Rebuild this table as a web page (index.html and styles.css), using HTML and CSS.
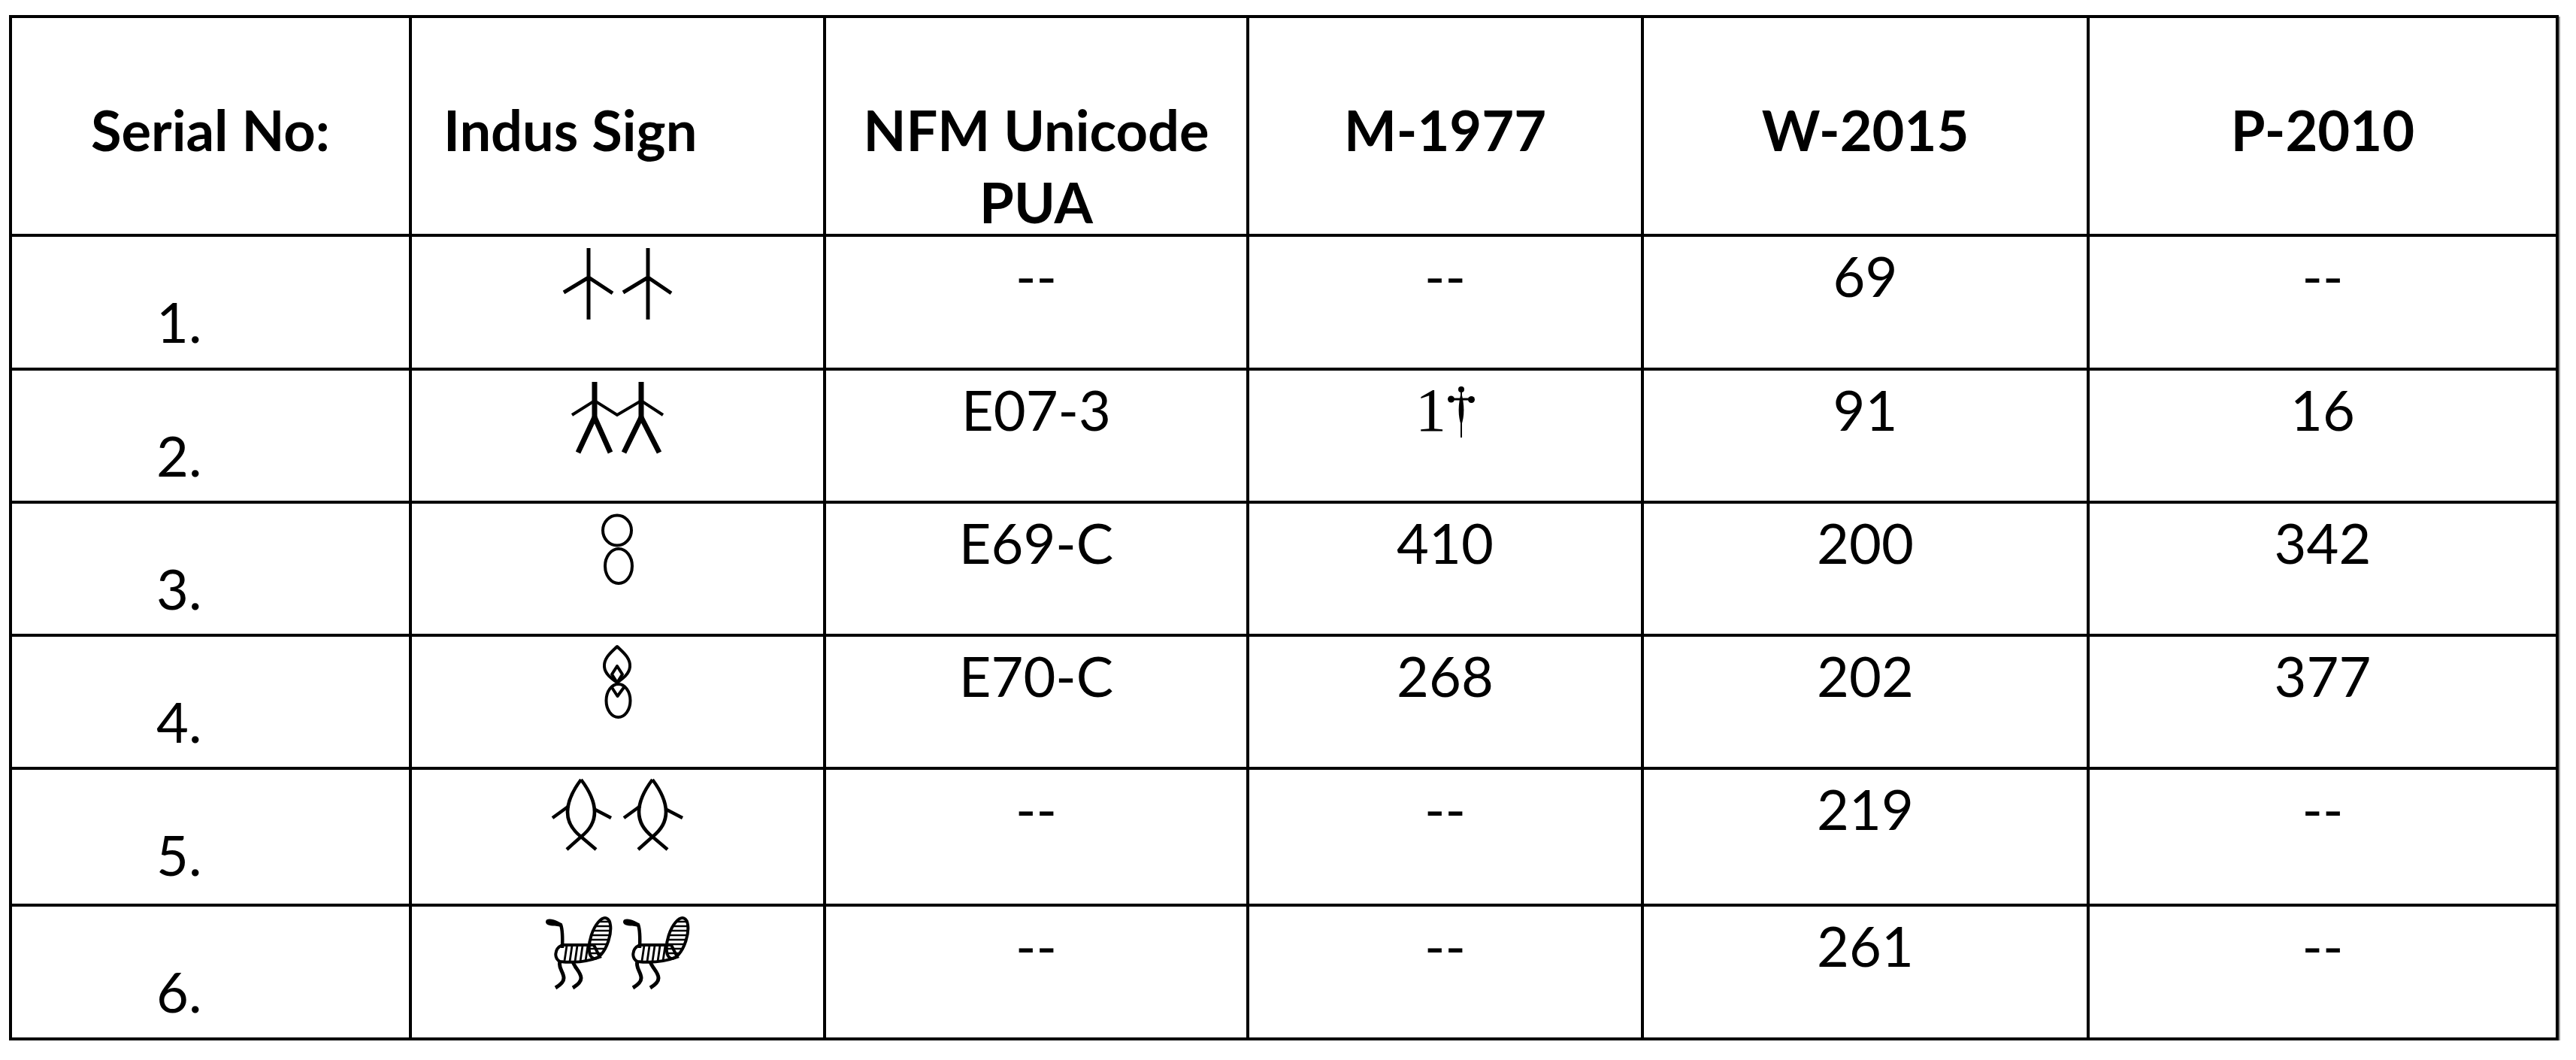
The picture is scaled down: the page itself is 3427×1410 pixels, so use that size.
FILE: index.html
```html
<!DOCTYPE html>
<html lang="en">
<head>
<meta charset="utf-8">
<title>Indus signs</title>
<link rel="stylesheet" href="styles.css">
</head>
<body>
<div class="sheet">
  <div class="grid" role="table">
    <div class="cell head" role="columnheader">Serial No:</div>
    <div class="cell head head-left" role="columnheader">Indus Sign</div>
    <div class="cell head" role="columnheader">NFM Unicode PUA</div>
    <div class="cell head" role="columnheader">M-1977</div>
    <div class="cell head" role="columnheader">W-2015</div>
    <div class="cell head" role="columnheader">P-2010</div>

    <div class="cell serial">1.</div>
    <div class="cell sign">
      <svg class="s1" width="153" height="100" viewBox="0 0 153 100">
        <g stroke="#000" stroke-width="5" fill="none">
          <path d="M38,2 V97 M5,61 L38,41 L70,62"/>
          <path d="M117,2 V97 M84,61 L117,41 L148,62"/>
        </g>
      </svg>
    </div>
    <div class="cell">--</div>
    <div class="cell">--</div>
    <div class="cell">69</div>
    <div class="cell">--</div>

    <div class="cell serial">2.</div>
    <div class="cell sign">
      <svg class="s2" width="130" height="100" viewBox="0 0 130 100">
        <g stroke="#000" fill="none">
          <path stroke-width="7" d="M34,3 V55 M96,3 V55"/>
          <path stroke-width="7" d="M34,50 L12,97 M34,50 L55,97 M96,50 L73,97 M96,50 L120,97"/>
          <path stroke-width="4" d="M4,47 L34,28 L64,47 L96,28 L125,47"/>
        </g>
      </svg>
    </div>
    <div class="cell">E07-3</div>
    <div class="cell"><span class="serif-one">1</span><svg class="dagger" width="36" height="68" viewBox="0 0 36 68">
        <circle cx="18" cy="4" r="4" fill="#000"/>
        <circle cx="4.5" cy="17" r="4.5" fill="#000"/>
        <circle cx="31.5" cy="17.5" r="4.5" fill="#000"/>
        <path d="M4,17 H32" stroke="#000" stroke-width="3"/>
        <path d="M18,8 C22.5,24 22.5,40 18,52 C13.5,40 13.5,24 18,8 Z" fill="#000"/>
        <path d="M18,3 V68" stroke="#000" stroke-width="2"/>
      </svg></div>
    <div class="cell">91</div>
    <div class="cell">16</div>

    <div class="cell serial">3.</div>
    <div class="cell sign">
      <svg class="s3" width="55" height="105" viewBox="0 0 55 105">
        <g stroke="#000" stroke-width="4" fill="none">
          <ellipse cx="27" cy="27.5" rx="19" ry="20"/>
          <ellipse cx="29" cy="75" rx="18" ry="23"/>
        </g>
      </svg>
    </div>
    <div class="cell">E69-C</div>
    <div class="cell">410</div>
    <div class="cell">200</div>
    <div class="cell">342</div>

    <div class="cell serial">4.</div>
    <div class="cell sign">
      <svg class="s4" width="55" height="105" viewBox="0 0 55 105">
        <g stroke="#000" stroke-width="4" fill="none" stroke-linejoin="round">
          <path d="M27,5 C20,12 9,20 10,32 C11,42 20,48 27,53 C34,48 43,42 44,32 C45,20 34,12 27,5 Z"/>
          <path d="M27,31 L20,42 L27,53 L34,42 Z"/>
          <ellipse cx="28.5" cy="77" rx="16" ry="22"/>
          <path d="M19,58 L27.5,71 L37,58"/>
        </g>
      </svg>
    </div>
    <div class="cell">E70-C</div>
    <div class="cell">268</div>
    <div class="cell">202</div>
    <div class="cell">377</div>

    <div class="cell serial">5.</div>
    <div class="cell sign">
      <svg class="s5" width="185" height="105" viewBox="0 0 185 105">
        <defs>
          <g id="fishman" stroke="#000" stroke-width="4.5" fill="none">
            <path d="M44,5 Q8,53 44,81 L64,98"/>
            <path d="M44,5 Q80,53 44,81 L25,98"/>
            <path d="M28,40 L6,56 M61,44 L84,56"/>
          </g>
        </defs>
        <use href="#fishman"/>
        <use href="#fishman" x="95"/>
      </svg>
    </div>
    <div class="cell">--</div>
    <div class="cell">--</div>
    <div class="cell">219</div>
    <div class="cell">--</div>

    <div class="cell serial">6.</div>
    <div class="cell sign">
      <svg class="s6" width="203" height="105" viewBox="0 0 203 105">
        <defs>
          <clipPath id="wingclip">
            <ellipse cx="78" cy="33" rx="12" ry="28" transform="rotate(18 78 33)"/>
          </clipPath>
          <g id="bird">
            <path d="M6,11 C6,6 15,7 21,10 L28,13.5 L27.5,18 L18,16.5 C10,16.5 6,15 6,11 Z" fill="#000"/>
            <path d="M26,15 C28.5,22 28.5,35 28,46" stroke="#000" stroke-width="4.5" fill="none"/>
            <path d="M28,42 L70,42 L78,58 C62,64 42,66 25,64 C17,60 17,47 28,42 Z" stroke="#000" stroke-width="4" fill="none"/>
            <path d="M34,43 L31,63 M41,43 L38,64 M48,43 L45,64 M55,43 L52,64 M62,43 L59,63" stroke="#000" stroke-width="2.8"/>
            <g clip-path="url(#wingclip)" stroke="#000" stroke-width="2.5">
              <path d="M60,11 H100 M60,17 H100 M60,23 H100 M60,29 H100 M60,35 H100 M60,41 H100 M60,47 H100 M60,53 H100"/>
            </g>
            <ellipse cx="78" cy="33" rx="12" ry="28" transform="rotate(18 78 33)" stroke="#000" stroke-width="4" fill="none"/>
            <path d="M25,64 C22,72 30,78 30,86 C30,92 24,96 19,99 M42,64 C44,72 53,78 53,86 C53,92 47,96 42,99" stroke="#000" stroke-width="5" fill="none"/>
          </g>
        </defs>
        <use href="#bird"/>
        <use href="#bird" x="103"/>
      </svg>
    </div>
    <div class="cell">--</div>
    <div class="cell">--</div>
    <div class="cell">261</div>
    <div class="cell">--</div>
  </div>
</div>
</body>
</html>
```

FILE: styles.css
```css
html, body {
  margin: 0;
  padding: 0;
  background: #ffffff;
}

body {
  font-family: Lato, "Open Sans", "Liberation Sans", sans-serif;
  color: #000;
}

.sheet {
  padding: 20px 0 0 12px;
}

.grid {
  display: grid;
  grid-template-columns: 532px 551px 563px 525px 593px 624px;
  grid-template-rows: 291px 178px 177px 177px 177px 182px 178px;
  width: max-content;
  border-left: 4px solid #000;
  border-top: 4px solid #000;
  box-shadow: 2px 2px 0 #9a9a9a;
}

.cell {
  box-sizing: border-box;
  border-right: 4px solid #000;
  border-bottom: 4px solid #000;
  font-size: 74px;
  line-height: 96px;
  text-align: center;
  padding-top: 4px;
  overflow: hidden;
}

.head {
  font-weight: 700;
  padding-top: 101px;
}

.head-left {
  text-align: left;
  padding-left: 42px;
}

.serial {
  text-align: left;
  padding-left: 192px;
  padding-top: 65px;
}

.sign {
  padding-top: 0;
}

.sign svg {
  display: block;
  margin-left: auto;
  margin-right: auto;
}

.s1 { margin-top: 13px; }
.s2 { margin-top: 12px; }
.s3 { margin-top: 8px; }
.s4 { margin-top: 8px; }
.s5 { margin-top: 8px; }
.s6 { margin-top: 9px; }

.serif-one {
  font-family: "Liberation Serif", "DejaVu Serif", serif;
  font-size: 82px;
}

.dagger {
  vertical-align: -9px;
  margin-left: 2px;
}
```
